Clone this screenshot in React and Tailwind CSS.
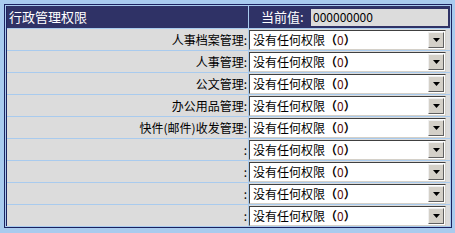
const rows = [
  '人事档案管理',
  '人事管理',
  '公文管理',
  '办公用品管理',
  '快件(邮件)收发管理',
  '',
  '',
  '',
  '',
];

function FakeSelect() {
  return (
    <div className="flex h-[20px] w-[197px] items-center border border-t-[#404040] border-l-[#404040] border-r-[#d4d0c8] border-b-[#d4d0c8] bg-white">
      <span className="flex-1 pl-[3px] text-[12px] leading-none text-black">
        没有任何权限<span className="font-bold">（</span>
        <span className="text-[#5a1010]">0</span>
        <span className="font-bold">）</span>
      </span>
      <div className="mr-px flex h-[16px] w-[16px] items-center justify-center border border-t-[#f0f0f0] border-l-[#f0f0f0] border-r-[#606060] border-b-[#606060] bg-[#d4d0c8]">
        <svg width="7" height="4" viewBox="0 0 7 4">
          <path d="M0 0h7L3.5 4z" fill="#000" />
        </svg>
      </div>
    </div>
  );
}

export default function App() {
  return (
    <div
      className="h-[233px] w-[455px] bg-[#a9cbee] pl-[4px] pt-[4px]"
      style={{ fontFamily: '"Noto Sans CJK SC", "Liberation Sans", sans-serif' }}
    >
      <div className="w-[448px] border border-[#1c2260] bg-[#a9cbee] p-px">
        <div className="grid grid-cols-[241px_1fr] gap-px border-l border-[#1c2260] bg-[#a9cbee]">
          <div className="flex h-[22px] items-center bg-[#2f3266] pl-[2px] text-[13px] text-white">
            行政管理权限
          </div>
          <div className="flex h-[22px] items-center bg-[#2f3266] pl-[12px] text-[13px] text-white">
            <span className="w-[50px]">当前值:</span>
            <div className="flex h-[17px] w-[137px] items-center bg-[#dcdcdc] pl-[2px] text-[12px] text-black">
              000000000
            </div>
          </div>
          {rows.map((label, i) => (
            <div key={i} className="contents">
              <div className="flex h-[21px] items-center justify-end bg-[#dcdcdc] pr-px text-[12px] text-black">
                {label}:
              </div>
              <div className="flex h-[21px] items-center bg-[#dcdcdc]">
                <FakeSelect />
              </div>
            </div>
          ))}
        </div>
      </div>
    </div>
  );
}
